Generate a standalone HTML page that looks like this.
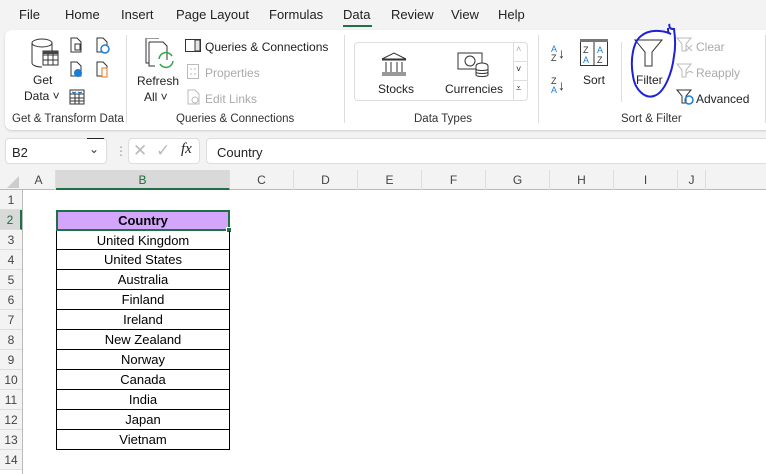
<!DOCTYPE html>
<html><head><style>
*{margin:0;padding:0;box-sizing:border-box}
body{width:766px;height:474px;overflow:hidden;background:#f3f3f3;font-family:"Liberation Sans",sans-serif;font-size:12px;color:#222;position:relative}
.a{position:absolute}
.t{position:absolute;white-space:nowrap}
.menu{top:7px;font-size:13px;color:#222}
.gray{color:#aaa}
.grp{font-size:11.5px;color:#333}
.col{position:absolute;top:170px;height:20px;border-right:1px solid #ddd;text-align:center;line-height:20px;color:#444;font-size:12px}
.row{position:absolute;left:0;width:22px;height:20px;border-bottom:1px solid #ddd;text-align:center;line-height:20px;color:#444;font-size:12px;background:#f3f3f3}
.cell{position:absolute;left:56px;width:174px;height:20px;border:1px solid #000;border-top:none;text-align:center;line-height:19px;font-size:13px;color:#000}
</style></head><body>
<!-- menu -->
<div class="t menu" style="left:19px">File</div>
<div class="t menu" style="left:65px">Home</div>
<div class="t menu" style="left:121px">Insert</div>
<div class="t menu" style="left:176px">Page Layout</div>
<div class="t menu" style="left:269px">Formulas</div>
<div class="t menu" style="left:343px">Data</div>
<div class="a" style="left:343px;top:25px;width:29px;height:2px;background:#1e7145"></div>
<div class="t menu" style="left:391px">Review</div>
<div class="t menu" style="left:451px">View</div>
<div class="t menu" style="left:498px">Help</div>
<!-- ribbon -->
<div class="a" style="left:5px;top:30px;width:770px;height:100px;background:#fff;border-radius:7px;box-shadow:0 1px 2px #ccc"></div>
<!-- get data -->
<svg class="a" style="left:30px;top:38px" width="30" height="34"><ellipse cx="12" cy="5" rx="10" ry="4" fill="none" stroke="#333"/><path d="M2 5v20c0 2 4 4 10 4" fill="none" stroke="#333"/><path d="M22 5v8" stroke="#333"/><rect x="13" y="13" width="15" height="14" fill="#fff" stroke="#333"/><path d="M13 17h15M13 22h15M18 13v14M23 13v14" stroke="#333"/><rect x="13" y="13" width="15" height="3" fill="#444"/></svg>
<div class="t" style="left:33px;top:73px;font-size:12px">Get</div>
<div class="t" style="left:24px;top:89px;font-size:12px">Data ˅</div>
<svg class="a" style="left:69px;top:37px" width="50" height="70"><path d="M2 1h6l4 4v10H2z" fill="#fff" stroke="#333"/><rect x="6" y="7" width="5" height="6" fill="none" stroke="#333"/><path d="M28 1h6l4 4v10H28z" fill="#fff" stroke="#333"/><circle cx="36" cy="12" r="4" fill="#fff" stroke="#1a7fd4" stroke-width="1.5"/><path d="M2 25h6l4 4v10H2z" fill="#fff" stroke="#333"/><circle cx="9" cy="36" r="4" fill="#1a7fd4"/><path d="M28 25h6l4 4v10H28z" fill="#fff" stroke="#333"/><rect x="33" y="31" width="5" height="9" fill="#fff" stroke="#e07a1f"/><rect x="1" y="53" width="14" height="14" fill="#fff" stroke="#333"/><path d="M1 57h14M1 61h14M1 64h14M6 57v10M10 57v10" stroke="#333"/><path d="M3 55l2 1l2-1M9 55l2 1l2-1" stroke="#1a7fd4"/></svg>
<div class="t grp" style="left:12px;top:113px">Get &amp; Transform Data</div>
<div class="a" style="left:126px;top:35px;width:1px;height:88px;background:#ddd"></div>
<!-- refresh -->
<svg class="a" style="left:143px;top:38px" width="34" height="34"><path d="M6 4h14l4 4v14" fill="none" stroke="#333"/><path d="M2 0h14" stroke="#333"/><path d="M3 1v24h3" fill="none" stroke="#333"/><path d="M6 4v24h6" fill="none" stroke="#333"/><path d="M16 21a7 7 0 0 1 13-3M30 23a7 7 0 0 1-13 3" fill="none" stroke="#2ea84a" stroke-width="1.5"/></svg>
<div class="t" style="left:137px;top:74px;font-size:12px">Refresh</div>
<div class="t" style="left:144px;top:90px;font-size:12px">All ˅</div>
<svg class="a" style="left:185px;top:39px" width="16" height="14"><rect x="0.5" y="0.5" width="15" height="12" fill="none" stroke="#333"/><rect x="10" y="1" width="5" height="11" fill="#e6e6e6" stroke="#333"/></svg>
<div class="t" style="left:205px;top:40px">Queries &amp; Connections</div>
<svg class="a" style="left:187px;top:64px" width="12" height="16"><rect x="0.5" y="0.5" width="11" height="14" fill="none" stroke="#bbb"/><path d="M3 5h2M3 10h2M7 5h2M7 10h2" stroke="#bbb"/></svg>
<div class="t gray" style="left:205px;top:66px">Properties</div>
<svg class="a" style="left:187px;top:89px" width="14" height="16"><path d="M1 1h7l4 4v10H1z" fill="none" stroke="#bbb"/><circle cx="8" cy="11" r="3" fill="none" stroke="#bbb"/></svg>
<div class="t gray" style="left:205px;top:92px">Edit Links</div>
<div class="t grp" style="left:176px;top:113px">Queries &amp; Connections</div>
<div class="a" style="left:344px;top:35px;width:1px;height:88px;background:#ddd"></div>
<!-- data types -->
<div class="a" style="left:354px;top:42px;width:174px;height:59px;border:1px solid #ddd;border-radius:4px"></div>
<div class="a" style="left:513px;top:42px;width:1px;height:59px;background:#ddd"></div>
<div class="t" style="left:516px;top:44px;font-size:9px;color:#aaa">˄</div>
<div class="t" style="left:516px;top:64px;font-size:9px">˅</div>
<div class="t" style="left:516px;top:83px;font-size:9px">⩡</div>
<div class="a" style="left:513px;top:61px;width:15px;height:1px;background:#ddd"></div>
<div class="a" style="left:513px;top:80px;width:15px;height:1px;background:#ddd"></div>
<svg class="a" style="left:380px;top:52px" width="28" height="24"><path d="M2 7L14 1l12 6z" fill="none" stroke="#333"/><path d="M2 8h24M2 21h24M2 23h24M6 10v10M11 10v10M17 10v10M22 10v10" stroke="#333"/></svg>
<div class="t" style="left:378px;top:82px">Stocks</div>
<svg class="a" style="left:457px;top:52px" width="32" height="28"><rect x="1" y="1" width="24" height="16" fill="none" stroke="#333"/><circle cx="13" cy="9" r="5" fill="none" stroke="#333"/><ellipse cx="25" cy="14" rx="6" ry="3" fill="#fff" stroke="#333"/><path d="M19 14v9c0 2 12 2 12 0v-9M19 17c0 2 12 2 12 0M19 20c0 2 12 2 12 0" fill="#fff" stroke="#333"/></svg>
<div class="t" style="left:445px;top:82px">Currencies</div>
<div class="t grp" style="left:414px;top:113px">Data Types</div>
<div class="a" style="left:538px;top:35px;width:1px;height:88px;background:#ddd"></div>
<!-- sort -->
<div class="t" style="left:551px;top:45px;font-size:9px;line-height:9px;color:#1a7fd4">A<br><span style="color:#333">Z</span></div>
<div class="t" style="left:558px;top:45px;font-size:14px">↓</div>
<div class="t" style="left:551px;top:77px;font-size:9px;line-height:9px;color:#333">Z<br><span style="color:#1a7fd4">A</span></div>
<div class="t" style="left:558px;top:77px;font-size:14px">↓</div>
<svg class="a" style="left:580px;top:39px" width="29" height="28"><rect x="0.5" y="0.5" width="27" height="26" fill="#fff" stroke="#333"/><rect x="0" y="0" width="28" height="3" fill="#777"/><path d="M14 3v24" stroke="#333"/><text x="3" y="14" font-size="9" fill="#333" font-family="Liberation Sans">Z</text><text x="3" y="24" font-size="9" fill="#1a7fd4" font-family="Liberation Sans">A</text><text x="17" y="14" font-size="9" fill="#1a7fd4" font-family="Liberation Sans">A</text><text x="17" y="24" font-size="9" fill="#333" font-family="Liberation Sans">Z</text></svg>
<div class="t" style="left:583px;top:73px">Sort</div>
<div class="a" style="left:621px;top:42px;width:1px;height:60px;background:#ddd"></div>
<svg class="a" style="left:634px;top:39px" width="30" height="30"><path d="M1 1h27l-10 12v14h-7V13z" fill="none" stroke="#333"/></svg>
<div class="t" style="left:636px;top:73px">Filter</div>
<svg class="a" style="left:676px;top:37px" width="20" height="70"><path d="M1 1h14l-5 6v7h-4V7z" fill="none" stroke="#bbb"/><path d="M10 8l6 6M16 8l-6 6" stroke="#bbb"/><path d="M1 27h14l-5 6v7h-4v-7z" fill="none" stroke="#bbb"/><path d="M10 39a4 4 0 0 1 7-3" fill="none" stroke="#bbb"/><path d="M1 53h14l-5 6v7h-4v-7z" fill="none" stroke="#333"/><circle cx="13" cy="63" r="4" fill="none" stroke="#1a7fd4" stroke-width="1.5"/></svg>
<div class="t gray" style="left:696px;top:40px">Clear</div>
<div class="t gray" style="left:696px;top:66px">Reapply</div>
<div class="t" style="left:696px;top:92px">Advanced</div>
<div class="t grp" style="left:621px;top:113px">Sort &amp; Filter</div>
<div class="a" style="left:765px;top:35px;width:1px;height:88px;background:#ddd"></div>
<!-- blue scribble -->
<svg class="a" style="left:620px;top:22px" width="70" height="84"><path d="M48 6c0 4 0 5 3 6c-8-4-22-5-30 2c-8 6-11 24-8 40c2 14 12 23 21 20c10-3 18-22 20-40c2-10 1-20 0-27c-6 0-4-3-5-5" fill="none" stroke="#1d22d6" stroke-width="2"/></svg>
<!-- formula bar -->
<div class="a" style="left:5px;top:138px;width:102px;height:26px;background:#fff;border:1px solid #ddd;border-radius:4px"></div>
<div class="t" style="left:12px;top:145px;font-size:13px">B2</div>
<div class="t" style="left:89px;top:142px;font-size:12px;color:#333">⌄</div>
<div class="a" style="left:87px;top:138px;width:17px;height:1px;background:#222"></div>
<div class="t" style="left:115px;top:144px;color:#999">⋮</div>
<div class="a" style="left:128px;top:138px;width:72px;height:26px;background:#fff;border:1px solid #ddd;border-radius:4px"></div>
<div class="t" style="left:133px;top:141px;font-size:17px;color:#bbb">✕</div>
<div class="t" style="left:156px;top:141px;font-size:17px;color:#bbb">✓</div>
<div class="t" style="left:181px;top:141px;font-size:15px;font-style:italic;font-family:'Liberation Serif',serif">fx</div>
<div class="a" style="left:206px;top:138px;width:570px;height:26px;background:#fff;border:1px solid #ddd;border-radius:4px"></div>
<div class="t" style="left:217px;top:145px;font-size:13px">Country</div>
<!-- grid -->
<div class="a" style="left:0;top:170px;width:766px;height:304px;background:#fff"></div>
<div class="a" style="left:0;top:170px;width:766px;height:20px;background:#f3f3f3;border-bottom:1px solid #bbb"></div>
<svg class="a" style="left:7px;top:176px" width="12" height="12"><path d="M12 0v12H0z" fill="#ccc"/></svg>
<div class="col" style="left:22px;width:34px">A</div>
<div class="col" style="left:56px;width:174px;background:#d9d9d9;color:#1e6b3e;border-bottom:2px solid #1e7145">B</div>
<div class="col" style="left:230px;width:64px">C</div>
<div class="col" style="left:294px;width:64px">D</div>
<div class="col" style="left:358px;width:64px">E</div>
<div class="col" style="left:422px;width:64px">F</div>
<div class="col" style="left:486px;width:64px">G</div>
<div class="col" style="left:550px;width:64px">H</div>
<div class="col" style="left:614px;width:64px">I</div>
<div class="col" style="left:678px;width:28px">J</div>
<div class="a" style="left:22px;top:190px;width:1px;height:284px;background:#bbb"></div>
<div class="row" style="top:190px">1</div>
<div class="row" style="top:210px;background:#d9d9d9;color:#1e6b3e;border-right:2px solid #1e7145">2</div>
<div class="row" style="top:230px">3</div><div class="row" style="top:250px">4</div><div class="row" style="top:270px">5</div><div class="row" style="top:290px">6</div><div class="row" style="top:310px">7</div><div class="row" style="top:330px">8</div><div class="row" style="top:350px">9</div><div class="row" style="top:370px">10</div><div class="row" style="top:390px">11</div><div class="row" style="top:410px">12</div><div class="row" style="top:430px">13</div><div class="row" style="top:450px">14</div>
<div class="a" style="left:56px;top:210px;width:174px;height:21px;background:#d3a6fb;border:2px solid #1e7145;text-align:center;line-height:17px;font-weight:bold;font-size:13px;color:#000">Country</div>
<div class="a" style="left:226px;top:227px;width:6px;height:6px;background:#1e7145;border:1px solid #fff"></div>
<div class="cell" style="top:231px;height:19px">United Kingdom</div>
<div class="cell" style="top:250px">United States</div>
<div class="cell" style="top:270px">Australia</div>
<div class="cell" style="top:290px">Finland</div>
<div class="cell" style="top:310px">Ireland</div>
<div class="cell" style="top:330px">New Zealand</div>
<div class="cell" style="top:350px">Norway</div>
<div class="cell" style="top:370px">Canada</div>
<div class="cell" style="top:390px">India</div>
<div class="cell" style="top:410px">Japan</div>
<div class="cell" style="top:430px">Vietnam</div>
</body></html>
